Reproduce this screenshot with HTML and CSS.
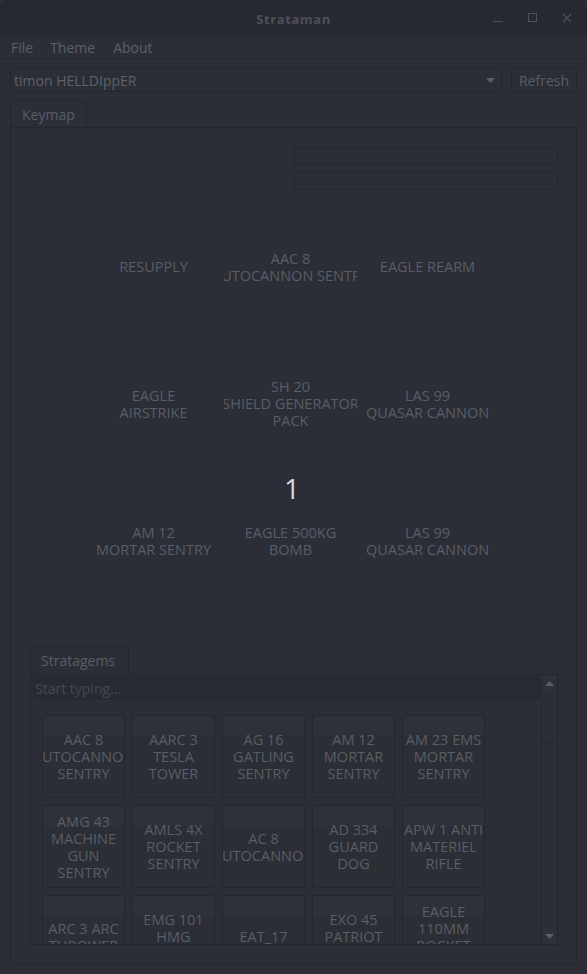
FILE: index.html
```html
<!DOCTYPE html>
<html>
<head>
<meta charset="utf-8">
<link rel="stylesheet" href="styles.css">
</head>
<body>
<div class="window">
  <div class="titlebar">
    <span class="title">Strataman</span>
    <div class="controls">
      <svg class="ctl" width="12" height="12" viewBox="0 0 12 12"><path d="M1 9.5h10" stroke="#4d5058" stroke-width="1.2"/></svg>
      <svg class="ctl" width="12" height="12" viewBox="0 0 12 12"><rect x="1.5" y="1.5" width="8" height="8" fill="none" stroke="#4d5058" stroke-width="1.1"/></svg>
      <svg class="ctl" width="12" height="12" viewBox="0 0 12 12"><path d="M2 2l8 8M10 2l-8 8" stroke="#4d5058" stroke-width="1.2"/></svg>
    </div>
  </div>
  <div class="menubar">
    <span class="menu-item">File</span>
    <span class="menu-item">Theme</span>
    <span class="menu-item">About</span>
  </div>
  <div class="toolbar">
    <div class="combo">
      <span class="combo-text">timon HELLDIppER</span>
      <svg class="combo-arrow" width="9" height="6" viewBox="0 0 9 6"><path d="M0 0h9L4.5 5z" fill="#5a5d65"/></svg>
    </div>
    <div class="button">Refresh</div>
  </div>
  <div class="tabbar">
    <div class="tab">Keymap</div>
  </div>
  <div class="panel">
    <div class="fields">
      <div class="field"></div>
      <div class="field"></div>
    </div>
    <div class="keygrid">
      <div class="cell"><span>RESUPPLY</span></div>
      <div class="cell"><span>AAC 8</span><span>AUTOCANNON SENTRY</span></div>
      <div class="cell"><span>EAGLE REARM</span></div>
      <div class="cell"><span>EAGLE</span><span>AIRSTRIKE</span></div>
      <div class="cell"><span>SH 20</span><span>SHIELD GENERATOR</span><span>PACK</span></div>
      <div class="cell"><span>LAS 99</span><span>QUASAR CANNON</span></div>
      <div class="cell"><span>AM 12</span><span>MORTAR SENTRY</span></div>
      <div class="cell"><span class="keynum">1</span><span>EAGLE 500KG</span><span>BOMB</span></div>
      <div class="cell"><span>LAS 99</span><span>QUASAR CANNON</span></div>
    </div>
    <div class="strat">
      <div class="tab strat-tab">Stratagems</div>
      <div class="frame">
        <div class="scrollarea">
          <div class="search">Start typing...</div>
          <div class="tiles">
            <div class="tile"><span>AAC 8</span><span>AUTOCANNON</span><span>SENTRY</span></div>
            <div class="tile"><span>AARC 3</span><span>TESLA</span><span>TOWER</span></div>
            <div class="tile"><span>AG 16</span><span>GATLING</span><span>SENTRY</span></div>
            <div class="tile"><span>AM 12</span><span>MORTAR</span><span>SENTRY</span></div>
            <div class="tile"><span>AM 23 EMS</span><span>MORTAR</span><span>SENTRY</span></div>
            <div class="tile"><span>AMG 43</span><span>MACHINE</span><span>GUN</span><span>SENTRY</span></div>
            <div class="tile"><span>AMLS 4X</span><span>ROCKET</span><span>SENTRY</span></div>
            <div class="tile"><span>AC 8</span><span>AUTOCANNON</span></div>
            <div class="tile"><span>AD 334</span><span>GUARD</span><span>DOG</span></div>
            <div class="tile"><span>APW 1 ANTI</span><span>MATERIEL</span><span>RIFLE</span></div>
            <div class="tile"><span>ARC 3 ARC</span><span>THROWER</span></div>
            <div class="tile"><span>EMG 101</span><span>HMG</span><span>EMPLACEMENT</span></div>
            <div class="tile"><span>EAT_17</span></div>
            <div class="tile"><span>EXO 45</span><span>PATRIOT</span><span>EXOSUIT</span></div>
            <div class="tile"><span>EAGLE</span><span>110MM</span><span>ROCKET</span><span>PODS</span></div>
          </div>
        </div>
        <div class="scrollbar">
          <div class="sb-btn"><svg width="9" height="6" viewBox="0 0 9 6"><path d="M0 5h9L4.5 0z" fill="#5a5d65"/></svg></div>
          <div class="sb-thumb"></div>
          <div class="sb-track"></div>
          <div class="sb-btn"><svg width="9" height="6" viewBox="0 0 9 6"><path d="M0 0h9L4.5 5z" fill="#5a5d65"/></svg></div>
        </div>
      </div>
    </div>
  </div>
</div>
</body>
</html>
```
FILE: styles.css
```css
html, body {
  margin: 0;
  padding: 0;
  background: #2b2e36;
}
body {
  width: 587px;
  height: 974px;
  overflow: hidden;
  font-family: "Open Sans", "Noto Sans", sans-serif;
  font-size: 14px;
  color: #5a5d65;
}
.window {
  display: flex;
  flex-direction: column;
  height: 974px;
}
.titlebar {
  height: 37px;
  flex: none;
  background: #262930;
  border-radius: 8px 8px 0 0;
  display: flex;
  align-items: center;
  justify-content: center;
  position: relative;
}
.title {
  font-weight: bold;
  font-size: 13px;
  letter-spacing: 0.6px;
  color: #4d5058;
}
.controls {
  position: absolute;
  right: 14px;
  top: 12px;
  display: flex;
  gap: 22px;
}
.controls .ctl:first-child { margin-right: 1px; }
.menubar {
  height: 21px;
  flex: none;
  display: flex;
  align-items: center;
  padding-left: 11px;
  gap: 16px;
  border-bottom: 1px solid #24272d;
  color: #5d6068;
}
.menu-item { line-height: 20px; }
.menu-item:nth-child(2) { margin-left: 1px; margin-right: 2px; }
.toolbar {
  display: flex;
  gap: 9px;
  margin: 9px 10px 0 10px;
  height: 24px;
}
.combo {
  flex: 1;
  border: 1px solid #23262c;
  border-radius: 2px;
  display: flex;
  align-items: center;
  padding: 0 6px 0 3px;
}
.combo-text { flex: 1; color: #5f626a; }
.combo-arrow { margin-top: 1px; }
.button {
  width: 64px;
  height: 22px;
  border: 1px solid #23262c;
  border-radius: 2px;
  display: flex;
  align-items: center;
  justify-content: center;
  color: #5a5d65;
}
.tabbar {
  margin: 8px 10px 0 10px;
  display: flex;
}
.tab {
  height: 26px;
  padding: 0 11px;
  border: 1px solid #23262c;
  border-bottom: none;
  border-radius: 3px 3px 0 0;
  display: flex;
  align-items: center;
  color: #5a5d65;
}
.panel {
  margin: 0 10px;
  height: 835px;
  border: 1px solid #23262c;
  display: flex;
  flex-direction: column;
}
.fields {
  margin: 19px 18px 0 0;
  align-self: flex-end;
  display: flex;
  flex-direction: column;
  gap: 7px;
}
.field {
  width: 262px;
  height: 16px;
  border: 1px solid #23262c;
  border-radius: 3px;
}
.keygrid {
  margin: 8px 0 0 76px;
  display: grid;
  grid-template-columns: repeat(3, 133px);
  grid-template-rows: repeat(3, 137px);
  column-gap: 4px;
}
.cell {
  position: relative;
  display: flex;
  flex-direction: column;
  align-items: center;
  justify-content: center;
  overflow: hidden;
  font-size: 14.5px;
  line-height: 17px;
  color: #5a5d65;
  white-space: nowrap;
}
.keynum {
  position: absolute;
  top: 0;
  left: 3px;
  right: 0;
  text-align: center;
  font-size: 28px;
  line-height: 32px;
  color: #d4d8e0;
}
.strat {
  margin: 37px 18px 0 19px;
  display: flex;
  flex-direction: column;
  align-items: flex-start;
}
.strat-tab {
  height: 27px;
  padding: 0 13px 0 10px;
}
.frame {
  align-self: stretch;
  height: 268px;
  border: 1px solid #23262c;
  display: flex;
  padding: 1px 1px 0 2px;
}
.scrollarea {
  flex: 1;
  overflow: hidden;
  display: flex;
  flex-direction: column;
}
.search {
  height: 24px;
  flex: none;
  background: #272a31;
  display: flex;
  align-items: center;
  padding-left: 2px;
  color: #45484f;
}
.tiles {
  margin: 15px 0 0 9px;
  display: grid;
  grid-template-columns: repeat(5, 83px);
  grid-auto-rows: 83px;
  gap: 7px;
}
.tile {
  border: 1px solid #24272d;
  border-radius: 2px;
  background: linear-gradient(#2e3138 0, #2e3138 20px, #2b2e35 20px);
  display: flex;
  flex-direction: column;
  align-items: center;
  justify-content: center;
  overflow: hidden;
  white-space: nowrap;
  font-size: 14.5px;
  line-height: 17px;
  color: #5a5d65;
}
.scrollbar {
  width: 14px;
  margin-left: 1px;
  display: flex;
  flex-direction: column;
  border-left: 1px solid #24272d;
}
.sb-btn {
  height: 15px;
  flex: none;
  display: flex;
  align-items: center;
  justify-content: center;
  background: #2e3138;
}
.sb-thumb {
  height: 51px;
  flex: none;
  border-bottom: 1px solid #24272d;
}
.sb-track { flex: 1; }
```
